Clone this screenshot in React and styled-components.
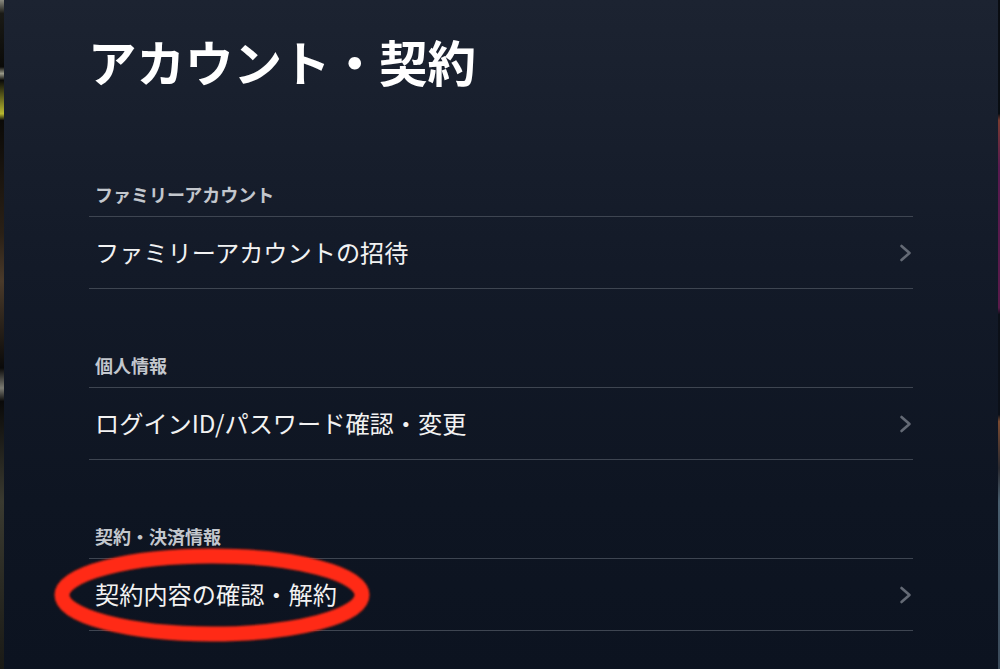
import React from "react";
import styled, { createGlobalStyle } from "styled-components";

const Global = createGlobalStyle`
  html, body { margin: 0; padding: 0; background: #0d1420; }
  body { font-family: "Noto Sans CJK JP", "Noto Sans", sans-serif; }
  #root { width: 1000px; height: 669px; overflow: hidden; }
`;

const Screen = styled.div`
  display: flex;
  width: 1000px;
  height: 669px;
  overflow: hidden;
`;

const EdgeStrip = styled.div`
  flex: 0 0 ${(p) => p.$w}px;
  background: ${(p) => p.$bg};
`;

const Panel = styled.main`
  flex: 1;
  display: flex;
  flex-direction: column;
  padding: 32px 85px 0 85px;
  background: linear-gradient(180deg, #1c2331 0%, #131a28 40%, #0e1522 75%, #0c1320 100%);
`;

const Title = styled.h1`
  margin: 0 0 0 -1px;
  font-size: 48.5px;
  line-height: 58px;
  font-weight: 700;
  color: #ffffff;
  letter-spacing: 0;
`;

const Section = styled.section`
  display: flex;
  flex-direction: column;
  margin-top: ${(p) => p.$gap}px;
`;

const SectionLabel = styled.h2`
  margin: 0;
  padding: 0 0 10px 6px;
  font-size: 18px;
  line-height: 23px;
  font-weight: 700;
  color: #c3c7cd;
  border-bottom: 1px solid #3e4551;
`;

const Row = styled.a`
  position: relative;
  display: flex;
  align-items: center;
  justify-content: space-between;
  height: 72px;
  box-sizing: border-box;
  padding: 0 0 3px 6px;
  border-bottom: 1px solid #3e4551;
  color: #f2f2f2;
  text-decoration: none;
  font-size: 24.2px;
  font-weight: 400;
`;

const RowText = styled.span`
  position: relative;
  z-index: 1;
`;

const Chevron = styled.svg`
  width: 13px;
  height: 18px;
  margin: 3px 1px 0 0;
  flex: 0 0 auto;
`;

const Annotation = styled.svg`
  position: absolute;
  left: -40px;
  top: -14px;
  width: 330px;
  height: 100px;
  pointer-events: none;
  z-index: 2;
  overflow: visible;
`;

const ChevronIcon = () => (
  <Chevron viewBox="0 0 13 18">
    <polyline
      points="2.5,2 10.5,9 2.5,16"
      fill="none"
      stroke="#646a75"
      strokeWidth="2.6"
      strokeLinecap="round"
      strokeLinejoin="round"
    />
  </Chevron>
);

const sections = [
  { label: "ファミリーアカウント", item: "ファミリーアカウントの招待", gap: 93 },
  { label: "個人情報", item: "ログインID/パスワード確認・変更", gap: 65 },
  { label: "契約・決済情報", item: "契約内容の確認・解約", gap: 65, circled: true },
];

export default function App() {
  return (
    <>
      <Global />
      <Screen>
        <EdgeStrip
          $w={4}
          $bg="linear-gradient(180deg, #8a8a80 0%, #1a1a16 2%, #0a0a08 10%, #9a9a8a 11%, #0a0a08 12%, #b8b830 17%, #0b0a08 18%, #2a2016 35%, #4a3a2a 42%, #0a0a0a 55%, #7a7a72 58%, #0a0a0a 60%, #3a3a30 75%, #1a1a16 100%)"
        />
        <Panel>
          <Title>アカウント・契約</Title>
          {sections.map((s) => (
            <Section key={s.label} $gap={s.gap}>
              <SectionLabel>{s.label}</SectionLabel>
              <Row href="#">
                <RowText>{s.item}</RowText>
                <ChevronIcon />
                {s.circled && (
                  <Annotation viewBox="0 0 330 100">
                    <defs>
                      <filter id="soft" x="-10%" y="-30%" width="120%" height="160%">
                        <feGaussianBlur stdDeviation="0.8" />
                      </filter>
                    </defs>
                    <ellipse
                      cx="163"
                      cy="50"
                      rx="150"
                      ry="39"
                      fill="none"
                      stroke="#ff2a12"
                      strokeWidth="15"
                      filter="url(#soft)"
                    />
                  </Annotation>
                )}
              </Row>
            </Section>
          ))}
        </Panel>
        <EdgeStrip
          $w={2}
          $bg="linear-gradient(180deg, #0a0d12 0%, #0a0d12 17%, #7a3a30 18%, #5a1a50 25%, #5a1a4a 46%, #0c1018 47%, #0c1018 62%, #7a4a30 63%, #2a2a30 70%, #4a6070 75%, #3a4a5a 100%)"
        />
      </Screen>
    </>
  );
}
